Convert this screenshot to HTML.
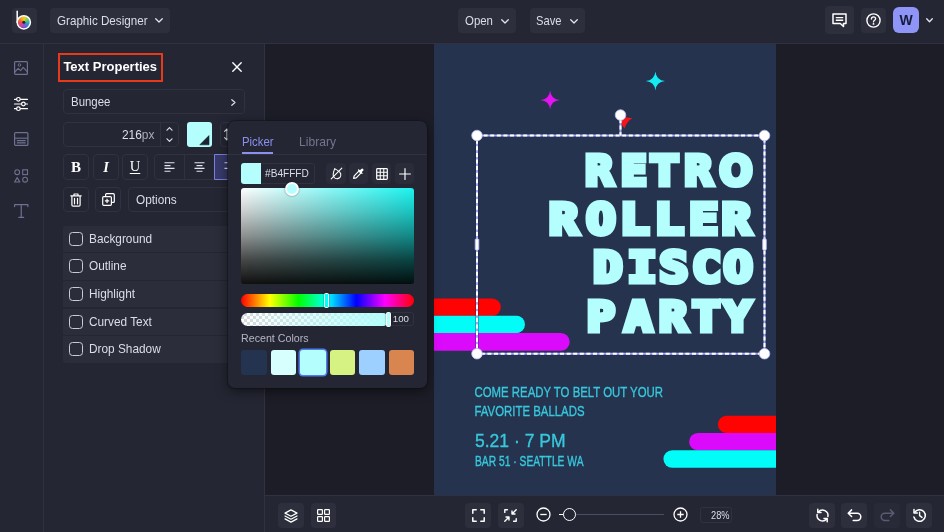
<!DOCTYPE html>
<html lang="en">
<head>
<meta charset="utf-8">
<title>Graphic Designer</title>
<style>
*{box-sizing:border-box;margin:0;padding:0}
html,body{width:944px;height:532px;overflow:hidden;background:#1d1d28}
body{position:relative;font-family:"Liberation Sans",sans-serif;color:#dcdde8;font-size:13px}
.abs{position:absolute}
#topbar,#sidebar,#panel,#canvas,#bottombar,#popup{will-change:transform}
#topbar{left:0;top:0;width:944px;height:44px;background:#242633;border-bottom:1px solid #2f3140}
#sidebar{left:0;top:44px;width:44px;height:488px;background:#242633;border-right:1px solid #2f3140}
#panel{left:44px;top:44px;width:221px;height:488px;background:#242633;border-right:1px solid #30323f}
#canvas{left:265px;top:44px;width:679px;height:451px;background:#1d1d28;overflow:hidden}
#bottombar{left:265px;top:495px;width:679px;height:37px;background:#242633;border-top:1px solid #2f3140}
.btn{position:absolute;background:#2d2f3d;border-radius:4px}
.tb{position:absolute;top:8px;height:25px;background:#2d2f3d;border-radius:4px;line-height:25px;color:#dcdde8;font-size:13px;white-space:nowrap}
.fld{position:absolute;border:1px solid #30323f;border-radius:4px;background:#242633}
.ico{position:absolute;display:block}
.t{position:absolute;white-space:nowrap;transform-origin:0 50%;display:block}
svg{display:block;overflow:visible}
.row{position:absolute;left:19px;width:182px;height:26.5px;background:#2b2d3a;font-size:13px;line-height:26.5px;color:#dcdde8}
.row i{position:absolute;left:6px;top:6.2px;width:14px;height:14px;border:1.5px solid #c9cad6;border-radius:3.5px}
.row span{position:absolute;left:26.2px;top:0;white-space:nowrap;transform-origin:0 50%;transform:scaleX(.91)}
</style>
</head>
<body>

<!-- ================= TOP BAR ================= -->
<div id="topbar" class="abs">
  <div class="btn" style="left:12px;top:8px;width:25px;height:25px">
    <div class="abs" style="left:5.8px;top:8.3px;width:12px;height:12px;border-radius:50%;background:conic-gradient(#f5d020,#8bd43c,#35b6a0,#3f7fe0,#8a4fd8,#e0409a,#f0503c,#f59a23,#f5d020)"></div>
    <svg class="ico" style="left:0;top:0" width="25" height="25" viewBox="0 0 25 25">
      <circle cx="11.8" cy="14.3" r="1.5" fill="#2a2233"/>
      <circle cx="11.8" cy="14.3" r="6.6" fill="none" stroke="#fff" stroke-width="1.5"/>
      <path d="M5.2 3.2V14.5" stroke="#fff" stroke-width="1.5" stroke-linecap="round" fill="none"/>
    </svg>
  </div>
  <div class="tb" style="left:50px;width:120px"><span class="t" style="left:6.5px;transform:scaleX(.895)">Graphic Designer</span>
    <svg class="ico" style="left:105px;top:10px" width="8" height="5" viewBox="0 0 8 5"><path d="M0.7 0.7L4 4L7.3 0.7" fill="none" stroke="#e4e5ee" stroke-width="1.25" stroke-linecap="round" stroke-linejoin="round"/></svg>
  </div>
  <div class="tb" style="left:458px;width:58px"><span class="t" style="left:7.4px;transform:scaleX(.88)">Open</span>
    <svg class="ico" style="left:43px;top:11px" width="8" height="5" viewBox="0 0 8 5"><path d="M0.7 0.7L4 4L7.3 0.7" fill="none" stroke="#e4e5ee" stroke-width="1.25" stroke-linecap="round" stroke-linejoin="round"/></svg>
  </div>
  <div class="tb" style="left:530px;width:55px"><span class="t" style="left:6.3px;transform:scaleX(.86)">Save</span>
    <svg class="ico" style="left:40px;top:11px" width="8" height="5" viewBox="0 0 8 5"><path d="M0.7 0.7L4 4L7.3 0.7" fill="none" stroke="#e4e5ee" stroke-width="1.25" stroke-linecap="round" stroke-linejoin="round"/></svg>
  </div>
  <div class="btn" style="left:825px;top:6px;width:29px;height:28px">
    <svg class="ico" style="left:7px;top:7px" width="15" height="15" viewBox="0 0 15 15"><path d="M1 1H14V10.5H11.5V13.5L8.3 10.5H1Z" fill="none" stroke="#fff" stroke-width="1.5" stroke-linejoin="round"/><path d="M3.8 4.6H11.2M3.8 7.2H11.2" stroke="#fff" stroke-width="1.4" fill="none"/></svg>
  </div>
  <div class="btn" style="left:861px;top:8px;width:25px;height:25px">
    <svg class="ico" style="left:5px;top:5px" width="15" height="15" viewBox="0 0 15 15"><circle cx="7.5" cy="7.5" r="6.6" fill="none" stroke="#fff" stroke-width="1.4"/><path d="M5.4 6.1C5.4 4.7 6.3 3.9 7.5 3.9C8.7 3.9 9.6 4.7 9.6 5.8C9.6 7.3 7.5 7.3 7.5 8.9" fill="none" stroke="#fff" stroke-width="1.3" stroke-linecap="round"/><circle cx="7.5" cy="10.9" r="0.9" fill="#fff"/></svg>
  </div>
  <div class="abs" style="left:893px;top:7px;width:26px;height:26px;border-radius:6px;background:#8e95f6;color:#161a3a;font-weight:bold;font-size:14px;line-height:26px;text-align:center">W</div>
  <svg class="ico" style="left:926px;top:18px" width="7" height="5" viewBox="0 0 7 5"><path d="M0.7 0.7L3.5 3.7L6.3 0.7" fill="none" stroke="#e4e5ee" stroke-width="1.3" stroke-linecap="round" stroke-linejoin="round"/></svg>
</div>

<!-- ================= SIDEBAR ================= -->
<div id="sidebar" class="abs">
  <!-- image -->
  <svg class="ico" style="left:14px;top:17px" width="14" height="14" viewBox="0 0 14 14"><rect x="0.6" y="0.6" width="12.8" height="12.8" rx="1" fill="none" stroke="#6e7190" stroke-width="1.2"/><circle cx="5.5" cy="4" r="1.3" fill="none" stroke="#6e7190" stroke-width="1"/><path d="M0.8 11L4.2 7.4L6.6 9.6L9.2 6.4L13.2 10.6" fill="none" stroke="#6e7190" stroke-width="1.1" stroke-linejoin="round"/></svg>
  <!-- sliders -->
  <svg class="ico" style="left:14px;top:52.5px" width="14" height="14" viewBox="0 0 14 14"><path d="M0.5 2.3H13.5M0.5 7H13.5M0.5 11.7H13.5" stroke="#fff" stroke-width="1.2" stroke-linecap="round"/><circle cx="4.4" cy="2.3" r="1.8" fill="#242633" stroke="#fff" stroke-width="1.2"/><circle cx="9.4" cy="7" r="1.8" fill="#242633" stroke="#fff" stroke-width="1.2"/><circle cx="4.4" cy="11.7" r="1.8" fill="#242633" stroke="#fff" stroke-width="1.2"/></svg>
  <!-- layout -->
  <svg class="ico" style="left:13.5px;top:88px" width="14.5" height="14" viewBox="0 0 14.5 14"><rect x="0.6" y="0.6" width="13.3" height="12.8" rx="1" fill="none" stroke="#6e7190" stroke-width="1.2"/><path d="M0.6 6.2H13.9" stroke="#6e7190" stroke-width="1.1"/><path d="M2.8 8.6H11.7M2.8 10.8H11.7" stroke="#6e7190" stroke-width="1.2"/></svg>
  <!-- shapes -->
  <svg class="ico" style="left:13.5px;top:124.5px" width="14.5" height="14" viewBox="0 0 14.5 14"><circle cx="3.2" cy="3.2" r="2.4" fill="none" stroke="#6e7190" stroke-width="1.1"/><rect x="8.7" y="0.8" width="4.8" height="4.8" fill="none" stroke="#6e7190" stroke-width="1.1"/><path d="M3.2 8.6L5.8 13H0.6Z" fill="none" stroke="#6e7190" stroke-width="1.1" stroke-linejoin="round"/><circle cx="11.1" cy="10.7" r="2.4" fill="none" stroke="#6e7190" stroke-width="1.1"/></svg>
  <!-- T -->
  <svg class="ico" style="left:13.5px;top:159.5px" width="14.5" height="14" viewBox="0 0 14.5 14"><path d="M0.6 2.6V0.7H13.9V2.6M7.25 0.7V13.3M4.8 13.3H9.7" fill="none" stroke="#6e7190" stroke-width="1.2" stroke-linejoin="round" stroke-linecap="round"/></svg>
</div>

<!-- ================= PANEL ================= -->
<div id="panel" class="abs">
  <div class="abs" style="left:13.6px;top:9px;width:105.6px;height:29px;border:2.7px solid #e8391b"></div>
  <div class="t" id="tp" style="left:19.4px;top:13.6px;font-size:13px;font-weight:bold;color:#fff;line-height:18px;transform:scaleX(1)">Text Properties</div>
  <svg class="ico" style="left:188px;top:17.5px" width="10" height="10" viewBox="0 0 10 10"><path d="M0.8 0.8L9.2 9.2M9.2 0.8L0.8 9.2" stroke="#fff" stroke-width="1.4" stroke-linecap="round"/></svg>

  <div class="fld" style="left:19px;top:45px;width:182px;height:25px"></div>
  <div class="t" style="left:26.5px;top:49px;font-size:13px;line-height:17px;color:#dcdde8;transform:scaleX(.88)">Bungee</div>
  <svg class="ico" style="left:187px;top:54.5px" width="5" height="7" viewBox="0 0 5 7"><path d="M0.8 0.7L4 3.5L0.8 6.3" fill="none" stroke="#dcdde8" stroke-width="1.2" stroke-linecap="round" stroke-linejoin="round"/></svg>

  <div class="fld" style="left:19px;top:78px;width:116px;height:25px"></div>
  <div class="abs" style="left:116px;top:79px;width:1px;height:23px;background:#30323f"></div>
  <div class="t" style="left:40px;top:82px;width:70.5px;text-align:right;font-size:13px;line-height:17px;color:#dcdde8;transform-origin:100% 50%;transform:scaleX(.92)">216<span style="color:#a9abbc">px</span></div>
  <svg class="ico" style="left:122px;top:82px" width="7" height="17" viewBox="0 0 7 17"><path d="M1 4.2L3.5 1.6L6 4.2M1 12.8L3.5 15.4L6 12.8" fill="none" stroke="#dcdde8" stroke-width="1.2" stroke-linecap="round" stroke-linejoin="round"/></svg>
  <div class="abs" style="left:143px;top:78px;width:25px;height:25px;border-radius:3px;background:#b4fffd;overflow:hidden"><svg width="25" height="25" viewBox="0 0 25 25"><path d="M22 13.6V22.8H12.8Z" fill="#1b2230" stroke="#1b2230" stroke-width="0.6" stroke-linejoin="round"/></svg></div>
  <div class="fld" style="left:176px;top:78px;width:25px;height:25px"></div>
  <svg class="ico" style="left:178.5px;top:84px" width="8" height="13" viewBox="0 0 8 13"><path d="M4 1V12M1.6 3.4L4 1L6.4 3.4M1.6 9.6L4 12L6.4 9.6" fill="none" stroke="#e4e5ee" stroke-width="1.1" stroke-linecap="round" stroke-linejoin="round"/></svg>

  <!-- format buttons -->
  <div class="fld" style="left:19px;top:110px;width:26px;height:26px"></div>
  <div class="fld" style="left:49px;top:110px;width:26px;height:26px"></div>
  <div class="fld" style="left:78px;top:110px;width:26px;height:26px"></div>
  <div class="abs" style="left:19px;top:110px;width:26px;height:26px;line-height:26px;text-align:center;font-family:'Liberation Serif',serif;font-weight:bold;font-size:15px;color:#fff">B</div>
  <div class="abs" style="left:49px;top:110px;width:26px;height:26px;line-height:26px;text-align:center;font-family:'Liberation Serif',serif;font-style:italic;font-weight:bold;font-size:14.5px;color:#fff">I</div>
  <div class="abs" style="left:78px;top:110px;width:26px;height:26px;line-height:25px;text-align:center;font-family:'Liberation Serif',serif;font-size:14.5px;color:#fff;text-decoration:underline;text-underline-offset:2px;text-decoration-thickness:1.3px">U</div>
  <div class="fld" style="left:110px;top:110px;width:91px;height:26px"></div>
  <div class="abs" style="left:140px;top:111px;width:1px;height:24px;background:#30323f"></div>
  <div class="abs" style="left:170px;top:110px;width:31px;height:26px;background:#383a6c;border:1px solid #7c80d8;border-radius:0 4px 4px 0"></div>
  <svg class="ico" style="left:120px;top:118px" width="11" height="10" viewBox="0 0 11 10"><path d="M0.5 0.8H10.5M0.5 3.6H6.5M0.5 6.4H10.5M0.5 9.2H6.5" stroke="#e4e5ee" stroke-width="1.1"/></svg>
  <svg class="ico" style="left:150px;top:118px" width="11" height="10" viewBox="0 0 11 10"><path d="M0.5 0.8H10.5M2.5 3.6H8.5M0.5 6.4H10.5M2.5 9.2H8.5" stroke="#e4e5ee" stroke-width="1.1"/></svg>
  <svg class="ico" style="left:180px;top:118px" width="11" height="10" viewBox="0 0 11 10"><path d="M0.5 0.8H10.5M4.5 3.6H10.5M0.5 6.4H10.5M4.5 9.2H10.5" stroke="#e4e5ee" stroke-width="1.1"/></svg>

  <!-- row 2 -->
  <div class="fld" style="left:19px;top:143px;width:26px;height:25px"></div>
  <svg class="ico" style="left:26px;top:149px" width="12" height="14" viewBox="0 0 12 14"><path d="M0.8 2.8H11.2M4 2.6V1H8V2.6M1.9 3V12C1.9 12.7 2.4 13.2 3.1 13.2H8.9C9.6 13.2 10.1 12.7 10.1 12V3M4.5 5.4V10.8M7.5 5.4V10.8" fill="none" stroke="#fff" stroke-width="1.2" stroke-linecap="round" stroke-linejoin="round"/></svg>
  <div class="fld" style="left:51px;top:143px;width:26px;height:25px"></div>
  <svg class="ico" style="left:58px;top:149px" width="13" height="13" viewBox="0 0 13 13"><rect x="0.7" y="3.6" width="8.7" height="8.7" rx="1" fill="none" stroke="#fff" stroke-width="1.2"/><path d="M3.6 3.4V1.7C3.6 1.1 4 0.7 4.6 0.7H11.3C11.9 0.7 12.3 1.1 12.3 1.7V8.4C12.3 9 11.9 9.4 11.3 9.4H9.6" fill="none" stroke="#fff" stroke-width="1.2"/><path d="M5.05 5.8V10.1M2.9 7.95H7.2" stroke="#fff" stroke-width="1.2"/></svg>
  <div class="fld" style="left:84px;top:143px;width:117px;height:25px"></div>
  <div class="t" style="left:91.5px;top:147px;font-size:13px;line-height:17px;color:#dcdde8;transform:scaleX(.91)">Options</div>

  <!-- checkboxes -->
  <div class="row" style="top:181.5px;border-radius:3px 3px 0 0"><i></i><span>Background</span></div>
  <div class="row" style="top:209.2px"><i></i><span>Outline</span></div>
  <div class="row" style="top:236.9px"><i></i><span>Highlight</span></div>
  <div class="row" style="top:264.6px"><i></i><span>Curved Text</span></div>
  <div class="row" style="top:292.3px;height:26.5px;border-radius:0 0 3px 3px"><i></i><span>Drop Shadow</span></div>
</div>

<!-- ================= CANVAS ================= -->
<div id="canvas" class="abs">
  <svg class="abs" style="left:169px;top:-1px" width="342" height="452" viewBox="434 43 342 452" font-family="'DejaVu Sans','Liberation Sans',sans-serif">
    <rect x="434" y="43" width="342" height="452" fill="#25334f"/>
    <!-- stars -->
    <path d="M550.1 90.4Q550.9 99.2 559.7 100Q550.9 100.8 550.1 109.6Q549.3 100.8 540.5 100Q549.3 99.2 550.1 90.4Z" fill="#e512f2"/>
    <path d="M655.4 71.4Q656.2 80.2 665.0 81Q656.2 81.8 655.4 90.6Q654.6 81.8 645.8 81Q654.6 80.2 655.4 71.4Z" fill="#14ecf4"/>
    <path d="M621 116.4L632.4 118.2Q626.9 121.2 624.4 128.5L621 123.5Z" fill="#f3141c"/>
    <!-- bars left -->
    <path d="M434 298.4H492.2A8.7 8.7 0 0 1 492.2 315.8H434Z" fill="#ff0202"/>
    <path d="M434 315.8H516.4A8.6 8.6 0 0 1 516.4 333H434Z" fill="#02fdf8"/>
    <path d="M434 333H560.8A8.9 8.9 0 0 1 560.8 350.8H434Z" fill="#dc0afa"/>
    <!-- bars right -->
    <path d="M776 415.8H726.5A8.6 8.6 0 0 0 726.5 433H776Z" fill="#ff0202"/>
    <path d="M776 433H697.8A8.65 8.65 0 0 0 697.8 450.3H776Z" fill="#dc0afa"/>
    <path d="M776 450.3H672.2A8.75 8.75 0 0 0 672.2 467.8H776Z" fill="#02fdf8"/>
    <!-- headline -->
    <g fill="#b4fffd" stroke="#b4fffd" stroke-linejoin="miter" stroke-miterlimit="3" font-weight="bold">
      <text font-family="'DejaVu Sans',sans-serif" font-size="41.7" stroke-width="5.0" transform="matrix(0.9411 0 0 0.9944 0 0)" x="620.91 659.36 691.87 726.41 764.27" y="185.76">RETRO</text>
      <text font-family="'DejaVu Sans Mono',monospace" font-size="41.7" stroke-width="5.0" transform="matrix(1.1690 0 0 1.0085 0 0)" x="469.68 501.40 530.39 559.99 589.35 617.40" y="231.81">ROLLER</text>
      <text font-family="'DejaVu Sans Mono',monospace" font-size="41.7" stroke-width="5.0" transform="matrix(1.1627 0 0 1.0113 0 0)" x="510.34 539.80 567.00 595.19 622.35" y="279.11">DISCO</text>
      <text font-family="'DejaVu Sans Mono',monospace" font-size="41.7" stroke-width="5.0" transform="matrix(1.1254 0 0 0.9944 0 0)" x="521.35 554.74 585.55 614.90 642.67" y="332.59">PARTY</text>
    </g>
    <!-- body text -->
    <g fill="#38c8dc" stroke="#38c8dc" stroke-width="0.35" font-family="'Liberation Sans',sans-serif">
      <text x="474.5" y="397.3" font-size="15.2" textLength="188.5" lengthAdjust="spacingAndGlyphs" style="text-transform:uppercase">come ready to belt out your</text>
      <text x="474.5" y="416" font-size="15.2" textLength="110" lengthAdjust="spacingAndGlyphs" style="text-transform:uppercase">favorite ballads</text>
      <text x="475" y="447" font-size="18.6" textLength="90.5" lengthAdjust="spacingAndGlyphs">5.21 · 7 PM</text>
      <text x="475" y="466.2" font-size="13.8" textLength="108.5" lengthAdjust="spacingAndGlyphs" style="text-transform:uppercase">Bar 51 · Seattle WA</text>
    </g>
    <!-- selection -->
    <g fill="none">
      <rect x="477" y="135.5" width="287.5" height="218.2" stroke="#1a2550" stroke-width="3.2" opacity="0.55"/>
      <rect x="477" y="135.5" width="287.5" height="218.2" stroke="#a3a6f2" stroke-width="2"/>
      <rect x="477" y="135.5" width="287.5" height="218.2" stroke="#fff" stroke-width="2" stroke-dasharray="4 2.6"/>
      <path d="M620.5 119V135.5" stroke="#a3a6f2" stroke-width="2"/>
      <path d="M620.5 119V135.5" stroke="#fff" stroke-width="2" stroke-dasharray="4 2.6"/>
    </g>
    <g fill="#fff" stroke="#b9bcf5" stroke-width="0.8">
      <circle cx="477" cy="135.5" r="5.3"/>
      <circle cx="764.5" cy="135.5" r="5.3"/>
      <circle cx="477" cy="353.7" r="5.3"/>
      <circle cx="764.5" cy="353.7" r="5.3"/>
      <circle cx="620.5" cy="115" r="5.3"/>
      <rect x="475.2" y="239" width="3.6" height="11" rx="0.8"/>
      <rect x="762.7" y="239" width="3.6" height="11" rx="0.8"/>
    </g>
  </svg>
</div>

<!-- ================= BOTTOM BAR ================= -->
<div id="bottombar" class="abs">
  <div class="btn" style="left:13px;top:7px;width:26px;height:25px">
    <svg class="ico" style="left:6px;top:5.5px" width="14" height="14" viewBox="0 0 14 14"><path d="M7 0.9L13 4.1L7 7.3L1 4.1Z" fill="none" stroke="#fff" stroke-width="1.2" stroke-linejoin="round"/><path d="M1 7L7 10.2L13 7M1 9.9L7 13.1L13 9.9" fill="none" stroke="#fff" stroke-width="1.2" stroke-linejoin="round" stroke-linecap="round"/></svg>
  </div>
  <div class="btn" style="left:45.8px;top:7px;width:25px;height:25px">
    <svg class="ico" style="left:6px;top:6px" width="13" height="13" viewBox="0 0 13 13"><rect x="0.6" y="0.6" width="4.8" height="4.8" rx="0.6" fill="none" stroke="#fff" stroke-width="1.2"/><rect x="7.6" y="0.6" width="4.8" height="4.8" rx="0.6" fill="none" stroke="#fff" stroke-width="1.2"/><rect x="0.6" y="7.6" width="4.8" height="4.8" rx="0.6" fill="none" stroke="#fff" stroke-width="1.2"/><rect x="7.6" y="7.6" width="4.8" height="4.8" rx="0.6" fill="none" stroke="#fff" stroke-width="1.2"/></svg>
  </div>
  <div class="btn" style="left:200px;top:7px;width:26px;height:25px">
    <svg class="ico" style="left:6.5px;top:6px" width="13" height="13" viewBox="0 0 13 13"><path d="M0.8 4.2V0.8H4.2M8.8 0.8H12.2V4.2M12.2 8.8V12.2H8.8M4.2 12.2H0.8V8.8" fill="none" stroke="#fff" stroke-width="1.5" stroke-linejoin="round" stroke-linecap="round"/></svg>
  </div>
  <div class="btn" style="left:233px;top:7px;width:25.5px;height:25px">
    <svg class="ico" style="left:6px;top:6px" width="13" height="13" viewBox="0 0 13 13"><path d="M0.8 3.4V0.8H3.4M9.6 12.2H12.2V9.6" fill="none" stroke="#fff" stroke-width="1.4" stroke-linecap="round" stroke-linejoin="round"/><path d="M12.2 0.8L8 5M8 2V5H11M0.8 12.2L5 8M2 8H5V11" fill="none" stroke="#fff" stroke-width="1.4" stroke-linecap="round" stroke-linejoin="round"/></svg>
  </div>
  <svg class="ico" style="left:270.5px;top:11px" width="15" height="15" viewBox="0 0 15 15"><circle cx="7.5" cy="7.5" r="6.5" fill="none" stroke="#fff" stroke-width="1.3"/><path d="M4.3 7.5H10.7" stroke="#fff" stroke-width="1.3"/></svg>
  <div class="abs" style="left:294px;top:17.7px;width:104.5px;height:1.5px;background:#4b4e62"></div>
  <div class="abs" style="left:294px;top:17.7px;width:6px;height:1.5px;background:#fff"></div>
  <div class="abs" style="left:298px;top:12px;width:13px;height:13px;border-radius:50%;background:#242633;border:1.6px solid #fff"></div>
  <svg class="ico" style="left:407.5px;top:11px" width="15" height="15" viewBox="0 0 15 15"><circle cx="7.5" cy="7.5" r="6.5" fill="none" stroke="#fff" stroke-width="1.3"/><path d="M4.3 7.5H10.7M7.5 4.3V10.7" stroke="#fff" stroke-width="1.3"/></svg>
  <div class="abs" style="left:434.5px;top:10.5px;width:32.5px;height:16px;border:1px solid #30323f;border-radius:3px;font-size:10.5px;line-height:14px;color:#dcdde8"><span class="t" style="left:10.3px;top:0;transform:scaleX(.88)">28%</span></div>

  <div class="btn" style="left:544px;top:7px;width:25.5px;height:25px">
    <svg class="ico" style="left:5.5px;top:5px;transform:scaleX(-1)" width="15" height="15" viewBox="0 0 15 15"><path d="M2.1 8.6A5.5 5.5 0 0 1 11.6 3.9M12.9 6.4A5.5 5.5 0 0 1 3.4 11.1" fill="none" stroke="#fff" stroke-width="1.5" stroke-linecap="round"/><path d="M12.2 1.2V4.4H9M2.8 13.8V10.6H6" fill="none" stroke="#fff" stroke-width="1.5" stroke-linecap="round" stroke-linejoin="round"/></svg>
  </div>
  <div class="btn" style="left:576px;top:7px;width:25.5px;height:25px">
    <svg class="ico" style="left:5.5px;top:6px" width="15" height="13" viewBox="0 0 15 13"><path d="M4.6 0.9L1.2 4.2L4.6 7.5M1.4 4.2H10.2A3.6 3.6 0 0 1 10.2 11.4H6.2" fill="none" stroke="#fff" stroke-width="1.5" stroke-linecap="round" stroke-linejoin="round"/></svg>
  </div>
  <div class="btn" style="left:609px;top:7px;width:25.5px;height:25px;background:#282a37">
    <svg class="ico" style="left:5.5px;top:6px" width="15" height="13" viewBox="0 0 15 13"><path d="M10.4 0.9L13.8 4.2L10.4 7.5M13.6 4.2H4.8A3.6 3.6 0 0 0 4.8 11.4H8.8" fill="none" stroke="#5a5d72" stroke-width="1.5" stroke-linecap="round" stroke-linejoin="round"/></svg>
  </div>
  <div class="btn" style="left:641px;top:7px;width:25.5px;height:25px">
    <svg class="ico" style="left:5.5px;top:5px" width="15" height="15" viewBox="0 0 15 15"><path d="M2.6 4.4A5.8 5.8 0 1 1 1.9 9" fill="none" stroke="#fff" stroke-width="1.5" stroke-linecap="round"/><path d="M2 1.6V4.9H5.3" fill="none" stroke="#fff" stroke-width="1.5" stroke-linecap="round" stroke-linejoin="round"/><path d="M7.6 4.2V7.6L10 9.4" fill="none" stroke="#fff" stroke-width="1.4" stroke-linecap="round" stroke-linejoin="round"/></svg>
  </div>
</div>

<!-- ================= COLOR POPUP ================= -->
<div class="abs" id="popup" style="left:228px;top:121px;width:199px;height:267px;background:#242633;border-radius:7px;box-shadow:0 3px 12px rgba(0,0,0,.55),0 0 0 1px rgba(20,21,30,.5)">
  <div class="t" style="left:13.5px;top:12px;font-size:13px;line-height:17px;color:#8b90ee;transform:scaleX(.872)">Picker</div>
  <div class="t" style="left:71px;top:12px;font-size:13px;line-height:17px;color:#73768f;transform:scaleX(.93)">Library</div>
  <div class="abs" style="left:0;top:33px;width:199px;height:1px;background:#30323f"></div>
  <div class="abs" style="left:13.5px;top:31px;width:31.5px;height:2px;background:#8b90ee"></div>

  <div class="abs" style="left:13px;top:42px;width:20px;height:20.5px;background:#b4fffd;border-radius:3px 0 0 3px"></div>
  <div class="abs" style="left:33px;top:42px;width:54px;height:20.5px;border:1px solid #30323f;border-left:0;border-radius:0 3px 3px 0;font-size:11px;line-height:19px;color:#dcdde8;white-space:nowrap"><span class="t" style="left:4px;top:0;transform:scaleX(.92)">#B4FFFD</span></div>

  <div class="btn" style="left:98px;top:42px;width:19.5px;height:20.5px;background:#2a2c39">
    <svg class="ico" style="left:3.5px;top:3.5px" width="13" height="13" viewBox="0 0 13 13"><path d="M6.5 1.3C8.5 3.6 10.3 5.7 10.3 7.9A3.8 3.8 0 0 1 2.7 7.9C2.7 5.7 4.5 3.6 6.5 1.3Z" fill="none" stroke="#fff" stroke-width="1.1" stroke-linejoin="round" transform="rotate(-20 6.5 6.5)"/><path d="M1.2 11.8L11.8 1.2" stroke="#fff" stroke-width="1.1" stroke-linecap="round"/></svg>
  </div>
  <div class="btn" style="left:120.5px;top:42px;width:19.5px;height:20.5px;background:#2a2c39">
    <svg class="ico" style="left:3.5px;top:3.5px" width="13" height="13" viewBox="0 0 13 13"><path d="M7.3 3.7L9.3 5.7L4.2 10.8L1.6 11.4L2.2 8.8Z" fill="none" stroke="#fff" stroke-width="1.2" stroke-linejoin="round"/><path d="M6.6 3L10 6.4" stroke="#fff" stroke-width="1.3" stroke-linecap="round"/><path d="M8.3 4.7L10.2 2.8" stroke="#fff" stroke-width="2.6" stroke-linecap="round"/></svg>
  </div>
  <div class="btn" style="left:143.5px;top:42px;width:19.5px;height:20.5px;background:#2a2c39">
    <svg class="ico" style="left:4px;top:4.5px" width="12" height="12" viewBox="0 0 12 12"><rect x="0.7" y="0.7" width="10.6" height="10.6" rx="0.8" fill="none" stroke="#fff" stroke-width="1.2"/><path d="M4.25 0.7V11.3M7.75 0.7V11.3M0.7 4.25H11.3M0.7 7.75H11.3" stroke="#fff" stroke-width="1.1"/></svg>
  </div>
  <div class="btn" style="left:166.5px;top:42px;width:19.5px;height:20.5px;background:#2a2c39">
    <svg class="ico" style="left:4px;top:4.5px" width="12" height="12" viewBox="0 0 12 12"><path d="M6 0.6V11.4M0.6 6H11.4" stroke="#fff" stroke-width="1.15" stroke-linecap="round"/></svg>
  </div>

  <div class="abs" style="left:13px;top:67px;width:173px;height:95.5px;border-radius:3px;background:linear-gradient(to bottom,rgba(0,0,0,0) 0%,rgba(0,0,0,.2) 25%,rgba(0,0,0,.44) 50%,rgba(0,0,0,.72) 75%,rgba(0,0,0,.94) 100%),linear-gradient(to right,#fff,#1cf3ef)"></div>
  <div class="abs" style="left:56.5px;top:60.5px;width:14px;height:14px;border-radius:50%;background:#b4fffd;border:2px solid #fff;box-shadow:0 0 2px rgba(0,0,0,.5)"></div>

  <div class="abs" style="left:13px;top:173px;width:173px;height:13px;border-radius:6.5px;background:linear-gradient(to right,#f00 0%,#ff0 16.66%,#0f0 33.33%,#0ff 50%,#00f 66.66%,#f0f 83.33%,#f00 100%)"></div>
  <div class="abs" style="left:96px;top:172px;width:5px;height:15px;border-radius:1.5px;border:1.2px solid #fff;background:#00fff9;box-shadow:0 0 1.5px rgba(0,0,0,.7)"></div>

  <div class="abs" style="left:13px;top:191.5px;width:148px;height:13px;border-radius:6.5px;background-color:#fff;background-image:linear-gradient(45deg,#d9d9d9 25%,transparent 25%,transparent 75%,#d9d9d9 75%),linear-gradient(45deg,#d9d9d9 25%,transparent 25%,transparent 75%,#d9d9d9 75%);background-size:6px 6px;background-position:0 0,3px 3px;overflow:hidden">
    <div style="width:100%;height:100%;background:linear-gradient(to right,rgba(180,255,253,0),#b4fffd)"></div>
  </div>
  <div class="abs" style="left:157.5px;top:190.5px;width:5px;height:15px;border-radius:1.5px;border:1.2px solid #fff;background:#b4fffd;box-shadow:0 0 1.5px rgba(0,0,0,.7)"></div>
  <div class="abs" style="left:162.5px;top:191px;width:23.5px;height:14px;border:1px solid #30323f;border-left:0;border-radius:0 3px 3px 0;font-size:9.7px;line-height:12px;color:#dcdde8;padding-left:2.3px">100</div>

  <div class="t" style="left:13px;top:210px;font-size:11.5px;line-height:15px;color:#b4b6c6;transform:scaleX(.928)">Recent Colors</div>
  <div class="abs" style="left:13px;top:228.5px;width:25.5px;height:25px;border-radius:3px;background:#243350"></div>
  <div class="abs" style="left:42.6px;top:228.5px;width:25.5px;height:25px;border-radius:3px;background:#d6fffe"></div>
  <div class="abs" style="left:72px;top:228.5px;width:25.5px;height:25px;border-radius:3px;background:#b4fffd;box-shadow:0 0 0 1.5px #4f7df0"></div>
  <div class="abs" style="left:101.8px;top:228.5px;width:25.5px;height:25px;border-radius:3px;background:#d6f283"></div>
  <div class="abs" style="left:131px;top:228.5px;width:25.5px;height:25px;border-radius:3px;background:#9dd0ff"></div>
  <div class="abs" style="left:160.5px;top:228.5px;width:25.5px;height:25px;border-radius:3px;background:#d98550"></div>
</div>

</body>
</html>
